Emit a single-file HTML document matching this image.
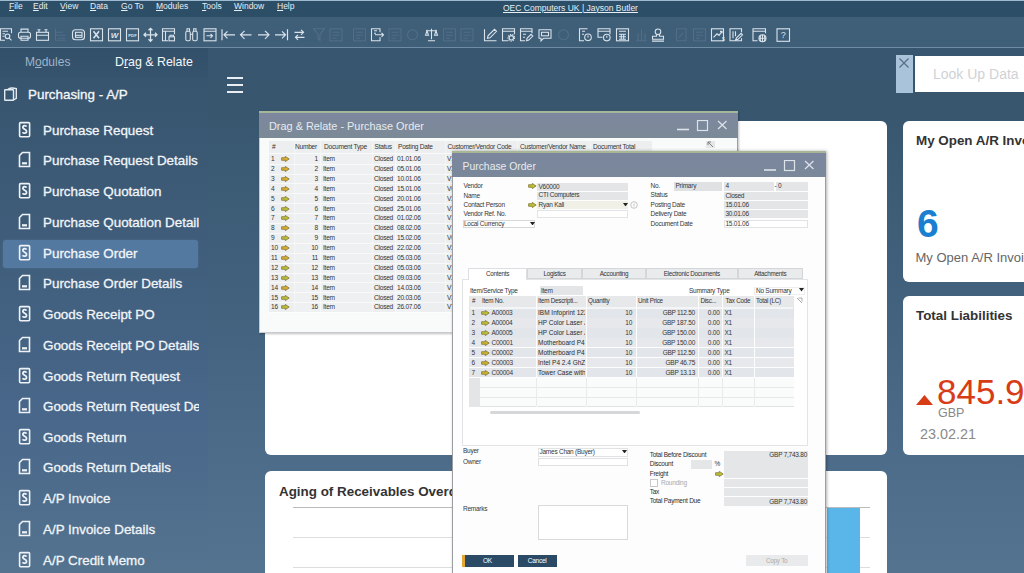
<!DOCTYPE html>
<html><head><meta charset="utf-8">
<style>
*{margin:0;padding:0;box-sizing:border-box}
html,body{width:1024px;height:573px;overflow:hidden;font-family:"Liberation Sans",sans-serif}
body{position:relative;background:linear-gradient(180deg,#37556e 0%,#38576f 20%,#43627e 55%,#4f6e8c 85%,#54738f 100%)}
.a{position:absolute}
.nw{white-space:nowrap}
#menubar{left:0;top:0;width:1024px;height:17px;background:#2c4e67;border-top:1px solid #9dbad0}
#menubar span{position:absolute;top:0px;font-size:8.5px;color:#e6edf3;line-height:11px}
#toolbar{left:0;top:17px;width:1024px;height:31px;background:#3f5e78;border-bottom:1.5px solid #6f8ca4}
#sidebar{left:0;top:48px;width:208px;height:525px;background:linear-gradient(180deg,#36536d 0%,#3c5a75 25%,#48678a 70%,#54738f 100%)}
#sidetabs{left:0;top:48px;width:208px;height:29px;background:linear-gradient(180deg,#32506a,#35536d)}
.si{position:absolute;left:43px;font-size:13.4px;color:#f2f5f8;white-space:nowrap;line-height:16px;-webkit-text-stroke:0.3px #f2f5f8}
.card{position:absolute;background:#fff;border-radius:6px}
</style></head>
<body>
<div id="menubar" class="a">
<span style="left:9px"><u>F</u>ile</span>
<span style="left:33px"><u>E</u>dit</span>
<span style="left:60px"><u>V</u>iew</span>
<span style="left:90px"><u>D</u>ata</span>
<span style="left:121px"><u>G</u>o To</span>
<span style="left:156px"><u>M</u>odules</span>
<span style="left:202px"><u>T</u>ools</span>
<span style="left:234px"><u>W</u>indow</span>
<span style="left:277px"><u>H</u>elp</span>
<span style="left:503px;top:1.5px;text-decoration:underline">OEC Computers UK | Jayson Butler</span>
</div>
<div id="toolbar" class="a"></div><svg class="a" style="left:0;top:0" width="1024" height="47"><g transform="translate(0,28.3)" stroke="#d9e3eb" fill="none" stroke-width="1.1"><path d="M11.5 5 V0.5 H0.5 V12 H5"/><path d="M2.5 3 H8 M2.5 5.5 H5 M2.5 8 H4.5"/><circle cx="7.5" cy="8" r="2.3"/><path d="M9.2 9.8 L11.5 12"/></g><g transform="translate(18,28.3)" stroke="#d9e3eb" fill="none" stroke-width="1.1"><rect x="0.5" y="4" width="12" height="6" rx="2"/><path d="M3 4 V0.8 H10 V4 M3 8 H10 V12 H3 Z"/></g><g transform="translate(36,28.3)" stroke="#d9e3eb" fill="none" stroke-width="1.1"><rect x="0.5" y="4" width="12" height="8"/><path d="M0.5 7 H12.5 M3 4 V1.5 M10 4 V1.5 M1.5 1.5 H4.5 M8.5 1.5 H11.5"/></g><g transform="translate(54.5,28.3)" stroke="#526e87" fill="none" stroke-width="1.1"><path d="M1 0.5 V12 H11 M1 4 H8 M1 7 H11 M4 10 H11"/></g><g transform="translate(72,28.3)" stroke="#d9e3eb" fill="none" stroke-width="1.1"><rect x="0.5" y="1.5" width="12" height="10" rx="3"/><rect x="3.5" y="4" width="6.5" height="5"/><path d="M3.5 7 H10"/></g><g transform="translate(90,28.3)" stroke="#d9e3eb" fill="none" stroke-width="1.1"><rect x="0.5" y="0.5" width="12" height="12"/><path d="M3.5 3 L9 10 M9 3 L3.5 10" stroke-width="1.6"/></g><g transform="translate(108,28.3)" stroke="#d9e3eb" fill="none" stroke-width="1.1"><rect x="0.5" y="0.5" width="12" height="12"/><text x="6.5" y="9.5" font-family="Liberation Sans" font-style="italic" font-weight="700" font-size="8" fill="#d9e3eb" stroke="none" text-anchor="middle">W</text></g><g transform="translate(126,28.3)" stroke="#d9e3eb" fill="none" stroke-width="1.1"><rect x="0.5" y="0.5" width="12" height="12"/><text x="6.5" y="8.3" font-family="Liberation Sans" font-weight="700" font-size="4.2" fill="#d9e3eb" stroke="none" text-anchor="middle">PDF</text></g><g transform="translate(144,28.3)" stroke="#d9e3eb" fill="none" stroke-width="1.1"><path d="M6.5 0 V13 M0 6.5 H13 M4.5 2 L6.5 0 L8.5 2 M2 4.5 L0 6.5 L2 8.5 M11 4.5 L13 6.5 L11 8.5 M4.5 11 L6.5 13 L8.5 11" stroke-width="1.3"/></g><g transform="translate(162,28.3)" stroke="#d9e3eb" fill="none" stroke-width="1.1"><path d="M12.5 6 V0.5 H0.5 V12.5 H6 M0.5 3 H12.5 M3.5 3 V12.5"/><rect x="7" y="8.5" width="5.5" height="4"/><path d="M8 8.5 V7 H11.5 V8.5"/></g><g transform="translate(185,28.3)" stroke="#d9e3eb" fill="none" stroke-width="1.1"><rect x="0.8" y="3" width="4.5" height="9.5" rx="1.5"/><rect x="7.7" y="3" width="4.5" height="9.5" rx="1.5"/><path d="M2 3 V0.5 H4.5 V3 M8.7 3 V0.5 H11 V3 M5.3 6 H7.7"/></g><g transform="translate(203.5,28.3)" stroke="#d9e3eb" fill="none" stroke-width="1.1"><rect x="0.5" y="0.5" width="12" height="12"/><path d="M0.5 3 H12.5 M3 7.5 H9 M7 5.5 L9 7.5 L7 9.5"/></g><g transform="translate(221,28.3)" stroke="#d9e3eb" fill="none" stroke-width="1.1"><path d="M1 1 V12 M3 6.5 H14 M6.5 3 L3 6.5 L6.5 10" stroke-width="1.2"/></g><g transform="translate(239.5,28.3)" stroke="#d9e3eb" fill="none" stroke-width="1.1"><path d="M1 6.5 H12 M5 2.5 L1 6.5 L5 10.5" stroke-width="1.2"/></g><g transform="translate(258,28.3)" stroke="#d9e3eb" fill="none" stroke-width="1.1"><path d="M0 6.5 H11 M7 2.5 L11 6.5 L7 10.5" stroke-width="1.2"/></g><g transform="translate(275,28.3)" stroke="#d9e3eb" fill="none" stroke-width="1.1"><path d="M12.5 1 V12 M0 6.5 H10.5 M7 3 L10.5 6.5 L7 10" stroke-width="1.2"/></g><g transform="translate(293.5,28.3)" stroke="#d9e3eb" fill="none" stroke-width="1.1"><path d="M1 4 H10 M7.5 1.5 L10 4 L7.5 6.5 M11 9 H2 M4.5 6.5 L2 9 L4.5 11.5" stroke-width="1.2"/></g><g transform="translate(313,28.3)" stroke="#526e87" fill="none" stroke-width="1.1"><path d="M0.5 0.5 H11.5 L7 6 V12 L5 10.5 V6 Z"/></g><g transform="translate(329.5,28.3)" stroke="#526e87" fill="none" stroke-width="1.1"><rect x="0.5" y="0.5" width="12" height="12"/><path d="M3 4 H10 M3 7 H10 M3 10 H7"/></g><g transform="translate(353,28.3)" stroke="#526e87" fill="none" stroke-width="1.1"><rect x="0.5" y="0.5" width="12" height="12"/><path d="M3 4 H10 M3 7 H10 M3 10 H7"/></g><g transform="translate(371,28.3)" stroke="#d9e3eb" fill="none" stroke-width="1.1"><path d="M9 4 V0.5 H0.5 V12.5 H9 V9 M3 2.5 H6 M3 5 H5"/><path d="M4 6.5 H12.5 M10.5 4.5 L12.5 6.5 L10.5 8.5"/></g><g transform="translate(388.5,28.3)" stroke="#526e87" fill="none" stroke-width="1.1"><rect x="0.5" y="0.5" width="12" height="12"/><path d="M3 4 H10 M3 7 H10 M3 10 H7"/></g><g transform="translate(406,28.3)" stroke="#526e87" fill="none" stroke-width="1.1"><circle cx="6.5" cy="6.5" r="5"/></g><g transform="translate(425,28.3)" stroke="#d9e3eb" fill="none" stroke-width="1.1"><path d="M6.5 0.5 V11 M1 2.5 H12 M3 12.5 H10 M0.5 7 L2 2.5 L3.5 7 Z M9.5 7 L11 2.5 L12.5 7 Z"/></g><g transform="translate(443,28.3)" stroke="#526e87" fill="none" stroke-width="1.1"><rect x="0.5" y="0.5" width="12" height="12"/><path d="M3 4 H10 M3 7 H10 M3 10 H7"/></g><g transform="translate(460.5,28.3)" stroke="#526e87" fill="none" stroke-width="1.1"><rect x="0.5" y="0.5" width="12" height="12"/><path d="M3 4 H10 M3 7 H10 M3 10 H7"/></g><g transform="translate(484,28.3)" stroke="#d9e3eb" fill="none" stroke-width="1.1"><path d="M0.5 1 V12.5 H12.5 M3.5 10 L4 7.5 L10.5 1 L12.5 3 L6 9.5 Z"/></g><g transform="translate(502,28.3)" stroke="#d9e3eb" fill="none" stroke-width="1.1"><path d="M12.5 6 V0.5 H0.5 V12.5 H6 M0.5 3 H12.5"/><circle cx="9.3" cy="9.5" r="2.2"/><circle cx="9.3" cy="9.5" r="3.3" stroke-dasharray="1.3 1"/></g><g transform="translate(520,28.3)" stroke="#d9e3eb" fill="none" stroke-width="1.1"><path d="M12 5 V0.5 H0.5 V12.5 H5 M0.5 3 H12 M3 6 H6 M3 9 H5"/><path d="M6.5 12.5 L7 10 L11 6 L12.8 7.8 L8.8 11.8 Z"/></g><g transform="translate(538.5,28.3)" stroke="#d9e3eb" fill="none" stroke-width="1.1"><path d="M0.5 1.5 H12.5 V10 H5 L2.5 12.5 V10 H0.5 Z"/><rect x="3" y="4" width="7" height="3.5"/></g><g transform="translate(557,28.3)" stroke="#526e87" fill="none" stroke-width="1.1"><circle cx="6.5" cy="6.5" r="5"/></g><g transform="translate(579,28.3)" stroke="#d9e3eb" fill="none" stroke-width="1.1"><path d="M8 1 V0.5 H0.5 V12.5 H5 M3 3 H6 M3 6 H5"/><circle cx="9" cy="9" r="3.3"/><path d="M9 7.3 V9.3"/></g><g transform="translate(597.5,28.3)" stroke="#d9e3eb" fill="none" stroke-width="1.1"><path d="M12.5 6 V0.5 H0.5 V9 H5 M0.5 3 H12.5"/><circle cx="9.3" cy="9.3" r="3.3"/><path d="M9.3 7.5 V9.5"/></g><g transform="translate(616,28.3)" stroke="#d9e3eb" fill="none" stroke-width="1.1"><rect x="0.5" y="0.5" width="12" height="12"/><path d="M3 3 H10 M3 6 H10 M3 8.5 H10 M3 11 H10 M5.3 6 V11 M7.7 6 V11"/></g><g transform="translate(636,28.3)" stroke="#526e87" fill="none" stroke-width="1.1"><path d="M2 12 V5 M5.5 12 V1 M9 12 V5 M0.5 12.5 H10.5"/></g><g transform="translate(651.5,28.3)" stroke="#d9e3eb" fill="none" stroke-width="1.1"><circle cx="6.5" cy="3.5" r="2.8"/><path d="M5 6.3 V8 H1 V11 H12 V8 H8 V6.3 M0.5 12.8 H12.5"/></g><g transform="translate(676,28.3)" stroke="#526e87" fill="none" stroke-width="1.1"><path d="M0.5 0.5 H10 V12.5 H0.5 Z M3 9 L7 5"/></g><g transform="translate(693,28.3)" stroke="#526e87" fill="none" stroke-width="1.1"><rect x="0.5" y="0.5" width="12" height="12"/><path d="M3 4 H10 M3 7 H10 M3 10 H7"/></g><g transform="translate(711,28.3)" stroke="#d9e3eb" fill="none" stroke-width="1.1"><rect x="0.5" y="0.5" width="12" height="12"/><path d="M2.5 9 L6 5.5 L8 7 L11 3 M9 3 H11 V5" stroke-width="1.2"/><text x="11" y="12.5" font-family="Liberation Sans" font-weight="700" font-size="5" fill="#d9e3eb" stroke="none">$</text></g><g transform="translate(729.5,28.3)" stroke="#d9e3eb" fill="none" stroke-width="1.1"><path d="M12 4 V0.5 H0.5 V12.5 H12 V10 M3.5 3 V10 M6 3 V8"/><path d="M6 12 L7 9.5 L11.5 5 L13 6.5 L8.5 11 Z"/></g><g transform="translate(752.5,28.3)" stroke="#d9e3eb" fill="none" stroke-width="1.1"><path d="M13 5 V0.5 H0.5 V12.5 H5 M0.5 3 H13"/><circle cx="10" cy="10" r="3.5"/><path d="M6.5 10 H13.5 M10 6.5 V13.5 M8.3 7 Q7 10 8.3 13 M11.7 7 Q13 10 11.7 13"/></g><g transform="translate(776.5,28.3)" stroke="#d9e3eb" fill="none" stroke-width="1.1"><rect x="0.5" y="0.5" width="12.5" height="12.5"/><text x="6.75" y="10" font-family="Liberation Sans" font-size="9" fill="#d9e3eb" stroke="none" text-anchor="middle">?</text></g></svg>
<div id="sidebar" class="a"></div>
<div id="sidetabs" class="a">
<span class="a nw" style="left:25px;top:7px;font-size:12px;color:#9fb4c8">M<u style="text-decoration-thickness:1px">o</u>dules</span>
<span class="a nw" style="left:115px;top:6.5px;font-size:12.4px;color:#f4f7fa">D<u style="text-decoration-thickness:1px">r</u>ag &amp; Relate</span>
</div>
<!-- book icon -->
<svg class="a" style="left:3px;top:86px" width="16" height="16" viewBox="0 0 16 16" fill="none" stroke="#e3ebf2" stroke-width="1.4"><rect x="1.7" y="3.7" width="8.8" height="10.5" rx="0.5"/><path d="M4.5 3.7 Q6.5 1.6 9.5 2 L13.3 2.6 L13.3 12.3 L10.5 14"/></svg>
<span class="a nw" style="left:28px;top:87px;font-size:13.4px;color:#f4f7fa;-webkit-text-stroke:0.3px #f4f7fa">Purchasing - A/P</span>

<div class="a" style="left:3px;top:240px;width:195px;height:28px;background:#5479a1;border-radius:3px;box-shadow:0 0 2px rgba(90,130,170,.6)"></div>
<div class="a" style="left:0;top:111px;width:199px;height:462px;overflow:hidden">
<div class="si" style="top:12px">Purchase Request</div>
<div class="si" style="top:42px">Purchase Request Details</div>
<div class="si" style="top:73px">Purchase Quotation</div>
<div class="si" style="top:104px">Purchase Quotation Details</div>
<div class="si" style="top:135px">Purchase Order</div>
<div class="si" style="top:165px">Purchase Order Details</div>
<div class="si" style="top:196px">Goods Receipt PO</div>
<div class="si" style="top:227px">Goods Receipt PO Details</div>
<div class="si" style="top:258px">Goods Return Request</div>
<div class="si" style="top:288px">Goods Return Request Details</div>
<div class="si" style="top:319px">Goods Return</div>
<div class="si" style="top:349px">Goods Return Details</div>
<div class="si" style="top:380px">A/P Invoice</div>
<div class="si" style="top:411px">A/P Invoice Details</div>
<div class="si" style="top:442px">A/P Credit Memo</div>
</div>
<svg class="a" style="left:0;top:109.5px" width="40" height="463" fill="none" stroke="#eef2f6" stroke-width="1.6">

<g transform="translate(0,12)"><rect x="19.6" y="0.6" width="10" height="14.2" rx="1"/><path d="M26.5 4.7 C26 3.5 23.7 3.2 23 4.6 C22.4 6 23.8 6.8 24.7 7.3 C25.7 7.8 26.9 8.6 26.4 10.1 C25.8 11.5 23.4 11.5 22.5 10.3" stroke-width="1.8"/></g><g transform="translate(0,42)"><path d="M22.5 0.5 L29.5 0.5 L29.5 14.5 L19.5 14.5 L19.5 3.5 Z"/><path d="M22 11.3 L27 11.3" stroke-width="2.2"/></g><g transform="translate(0,73)"><rect x="19.6" y="0.6" width="10" height="14.2" rx="1"/><path d="M26.5 4.7 C26 3.5 23.7 3.2 23 4.6 C22.4 6 23.8 6.8 24.7 7.3 C25.7 7.8 26.9 8.6 26.4 10.1 C25.8 11.5 23.4 11.5 22.5 10.3" stroke-width="1.8"/></g><g transform="translate(0,104)"><path d="M22.5 0.5 L29.5 0.5 L29.5 14.5 L19.5 14.5 L19.5 3.5 Z"/><path d="M22 11.3 L27 11.3" stroke-width="2.2"/></g><g transform="translate(0,135)"><rect x="19.6" y="0.6" width="10" height="14.2" rx="1"/><path d="M26.5 4.7 C26 3.5 23.7 3.2 23 4.6 C22.4 6 23.8 6.8 24.7 7.3 C25.7 7.8 26.9 8.6 26.4 10.1 C25.8 11.5 23.4 11.5 22.5 10.3" stroke-width="1.8"/></g><g transform="translate(0,165)"><path d="M22.5 0.5 L29.5 0.5 L29.5 14.5 L19.5 14.5 L19.5 3.5 Z"/><path d="M22 11.3 L27 11.3" stroke-width="2.2"/></g><g transform="translate(0,196)"><rect x="19.6" y="0.6" width="10" height="14.2" rx="1"/><path d="M26.5 4.7 C26 3.5 23.7 3.2 23 4.6 C22.4 6 23.8 6.8 24.7 7.3 C25.7 7.8 26.9 8.6 26.4 10.1 C25.8 11.5 23.4 11.5 22.5 10.3" stroke-width="1.8"/></g><g transform="translate(0,227)"><path d="M22.5 0.5 L29.5 0.5 L29.5 14.5 L19.5 14.5 L19.5 3.5 Z"/><path d="M22 11.3 L27 11.3" stroke-width="2.2"/></g><g transform="translate(0,258)"><rect x="19.6" y="0.6" width="10" height="14.2" rx="1"/><path d="M26.5 4.7 C26 3.5 23.7 3.2 23 4.6 C22.4 6 23.8 6.8 24.7 7.3 C25.7 7.8 26.9 8.6 26.4 10.1 C25.8 11.5 23.4 11.5 22.5 10.3" stroke-width="1.8"/></g><g transform="translate(0,288)"><path d="M22.5 0.5 L29.5 0.5 L29.5 14.5 L19.5 14.5 L19.5 3.5 Z"/><path d="M22 11.3 L27 11.3" stroke-width="2.2"/></g><g transform="translate(0,319)"><rect x="19.6" y="0.6" width="10" height="14.2" rx="1"/><path d="M26.5 4.7 C26 3.5 23.7 3.2 23 4.6 C22.4 6 23.8 6.8 24.7 7.3 C25.7 7.8 26.9 8.6 26.4 10.1 C25.8 11.5 23.4 11.5 22.5 10.3" stroke-width="1.8"/></g><g transform="translate(0,349)"><path d="M22.5 0.5 L29.5 0.5 L29.5 14.5 L19.5 14.5 L19.5 3.5 Z"/><path d="M22 11.3 L27 11.3" stroke-width="2.2"/></g><g transform="translate(0,380)"><rect x="19.6" y="0.6" width="10" height="14.2" rx="1"/><path d="M26.5 4.7 C26 3.5 23.7 3.2 23 4.6 C22.4 6 23.8 6.8 24.7 7.3 C25.7 7.8 26.9 8.6 26.4 10.1 C25.8 11.5 23.4 11.5 22.5 10.3" stroke-width="1.8"/></g><g transform="translate(0,411)"><path d="M22.5 0.5 L29.5 0.5 L29.5 14.5 L19.5 14.5 L19.5 3.5 Z"/><path d="M22 11.3 L27 11.3" stroke-width="2.2"/></g><g transform="translate(0,442)"><rect x="19.6" y="0.6" width="10" height="14.2" rx="1"/><path d="M26.5 4.7 C26 3.5 23.7 3.2 23 4.6 C22.4 6 23.8 6.8 24.7 7.3 C25.7 7.8 26.9 8.6 26.4 10.1 C25.8 11.5 23.4 11.5 22.5 10.3" stroke-width="1.8"/></g>
</svg>

<!-- hamburger -->
<div class="a" style="left:227px;top:77px;width:16px;height:2px;background:#e8eef3"></div>
<div class="a" style="left:227px;top:84px;width:16px;height:2px;background:#e8eef3"></div>
<div class="a" style="left:227px;top:91px;width:16px;height:2px;background:#e8eef3"></div>

<!-- lookup -->
<div class="a" style="left:896px;top:55px;width:17px;height:38px;background:#a9c3da"></div>
<svg class="a" style="left:898px;top:57px" width="12" height="12" stroke="#5b7286" stroke-width="1.3"><path d="M1.5 1.5 L10.5 10.5 M10.5 1.5 L1.5 10.5"/></svg>
<div class="a" style="left:915px;top:56px;width:109px;height:36px;background:#fff"></div>
<span class="a nw" style="left:933px;top:65.5px;font-size:14px;color:#cfd2d5">Look Up Data</span>

<!-- dashboard cards -->
<div class="card" style="left:265px;top:121px;width:622px;height:334px"></div>
<div class="card" style="left:903px;top:121px;width:140px;height:161px">
<span class="a nw" style="left:13px;top:12px;font-size:13.4px;font-weight:700;color:#333">My Open A/R Invoices</span>
<span class="a nw" style="left:14px;top:81px;font-size:39px;font-weight:700;color:#1a7fd0">6</span>
<span class="a nw" style="left:12.5px;top:129px;font-size:13px;color:#666">My Open A/R Invoices</span>
</div>
<div class="card" style="left:903px;top:296px;width:140px;height:159px">
<span class="a nw" style="left:13px;top:12px;font-size:13.4px;font-weight:700;color:#333">Total Liabilities</span>
<svg class="a" style="left:13px;top:99px" width="17" height="10"><path d="M0 10 L8.5 0 L17 10 Z" fill="#d83c17"/></svg>
<span class="a nw" style="left:34px;top:76px;font-size:35px;color:#d83c17">845.90</span>
<span class="a nw" style="left:35px;top:110px;font-size:12.5px;color:#888">GBP</span>
<span class="a nw" style="left:17px;top:130px;font-size:14.4px;color:#8a8a8a">23.02.21</span>
</div>
<div class="card" style="left:265px;top:471px;width:622px;height:110px">
<span class="a nw" style="left:14px;top:13px;font-size:13.4px;font-weight:700;color:#333">Aging of Receivables Overdue</span>
<div class="a" style="left:28px;top:36px;width:577px;height:1px;background:#bbb"></div>
<div class="a" style="left:28px;top:66px;width:577px;height:1px;background:#ddd"></div>
<div class="a" style="left:28px;top:96px;width:577px;height:1px;background:#ddd"></div>
<div class="a" style="left:562px;top:37px;width:33px;height:80px;background:#5ab5e8"></div>
</div>

<div class="a" style="left:259px;top:111px;width:479px;height:222px;background:#f9fafa;border-left:1px solid #c5cbd0;border-right:1px solid #9aa0a6;border-bottom:1px solid #c8ccd0;box-shadow:1px 1px 2px rgba(0,0,0,.25)"></div>
<div class="a" style="left:259px;top:111px;width:479px;height:2px;background:#a6b698;"></div>
<div class="a" style="left:259px;top:113px;width:479px;height:25px;background:linear-gradient(180deg,#7d879f 0%,#7b8a96 100%);"></div>
<span class="a nw" style="left:269px;top:121px;line-height:10px;font-size:10.9px;color:#e6ebef;">Drag &amp; Relate - Purchase Order</span>
<svg class="a" style="left:677px;top:120px" width="60" height="14" fill="none" stroke="#dde3ea" stroke-width="1.2"><path d="M0 9.5 L12 9.5" stroke-width="1.6"/><rect x="20.5" y="0.5" width="10" height="10"/><path d="M41 1 L49.5 9 M49.5 1 L41 9"/></svg>
<div class="a" style="left:269px;top:141px;width:383px;height:11.5px;background:#eceeef;"></div>
<span class="a nw" style="left:272px;top:142px;line-height:10px;font-size:6.6px;color:#333;letter-spacing:-0.25px;">#</span>
<span class="a nw" style="left:295px;top:142px;line-height:10px;font-size:6.6px;color:#333;letter-spacing:-0.25px;">Number</span>
<span class="a nw" style="left:324px;top:142px;line-height:10px;font-size:6.6px;color:#333;letter-spacing:-0.25px;">Document Type</span>
<span class="a nw" style="left:374.5px;top:142px;line-height:10px;font-size:6.6px;color:#333;letter-spacing:-0.25px;">Status</span>
<span class="a nw" style="left:398px;top:142px;line-height:10px;font-size:6.6px;color:#333;letter-spacing:-0.25px;">Posting Date</span>
<span class="a nw" style="left:447.5px;top:142px;line-height:10px;font-size:6.6px;color:#333;letter-spacing:-0.25px;">Customer/Vendor Code</span>
<span class="a nw" style="left:520px;top:142px;line-height:10px;font-size:6.6px;color:#333;letter-spacing:-0.25px;">Customer/Vendor Name</span>
<span class="a nw" style="left:593px;top:142px;line-height:10px;font-size:6.6px;color:#333;letter-spacing:-0.25px;">Document Total</span>
<div class="a" style="left:269px;top:153.5px;width:383px;height:158.5px;background:#eceeef;"></div>
<div class="a" style="left:295px;top:153.5px;width:77px;height:158.5px;background:#eff0f1;"></div>
<div class="a" style="left:395px;top:153.5px;width:25px;height:158.5px;background:#f1f2f3;"></div>
<div class="a" style="left:294px;top:141px;width:0.6000000000000227px;height:171px;background:rgba(255,255,255,0.45);"></div>
<div class="a" style="left:320px;top:141px;width:0.6000000000000227px;height:171px;background:rgba(255,255,255,0.45);"></div>
<div class="a" style="left:372px;top:141px;width:0.6000000000000227px;height:171px;background:rgba(255,255,255,0.45);"></div>
<div class="a" style="left:395px;top:141px;width:0.6000000000000227px;height:171px;background:rgba(255,255,255,0.45);"></div>
<div class="a" style="left:444.5px;top:141px;width:0.6000000000000227px;height:171px;background:rgba(255,255,255,0.45);"></div>
<div class="a" style="left:517px;top:141px;width:0.6000000000000227px;height:171px;background:rgba(255,255,255,0.45);"></div>
<div class="a" style="left:590px;top:141px;width:0.6000000000000227px;height:171px;background:rgba(255,255,255,0.45);"></div>
<div class="a" style="left:269px;top:163.6px;width:383px;height:0.700000000000017px;background:rgba(255,255,255,0.6);"></div>
<span class="a nw" style="left:271px;top:154px;line-height:10px;font-size:6.6px;color:#333;letter-spacing:-0.25px;">1</span>
<svg class="a" style="left:280.5px;top:156px" width="9" height="6" viewBox="0 0 9 6"><path d="M0.6 1.7 L4.3 1.7 L4.3 0.4 L8.2 3 L4.3 5.6 L4.3 4.3 L0.6 4.3 Z" fill="#d9ae33" stroke="#7d6a22" stroke-width="0.7" stroke-linejoin="round"/></svg>
<span class="a nw" style="right:706px;top:154px;line-height:10px;font-size:6.6px;color:#333;letter-spacing:-0.25px;">1</span>
<span class="a nw" style="left:323px;top:154px;line-height:10px;font-size:6.6px;color:#333;letter-spacing:-0.25px;">Item</span>
<span class="a nw" style="left:374px;top:154px;line-height:10px;font-size:6.6px;color:#333;letter-spacing:-0.25px;">Closed</span>
<span class="a nw" style="left:397px;top:154px;line-height:10px;font-size:6.6px;color:#333;letter-spacing:-0.25px;">01.01.06</span>
<span class="a nw" style="left:447px;top:154px;line-height:10px;font-size:6.6px;color:#333;letter-spacing:-0.25px;">V10000</span>
<div class="a" style="left:269px;top:173.5px;width:383px;height:0.700000000000017px;background:rgba(255,255,255,0.6);"></div>
<span class="a nw" style="left:271px;top:164px;line-height:10px;font-size:6.6px;color:#333;letter-spacing:-0.25px;">2</span>
<svg class="a" style="left:280.5px;top:166px" width="9" height="6" viewBox="0 0 9 6"><path d="M0.6 1.7 L4.3 1.7 L4.3 0.4 L8.2 3 L4.3 5.6 L4.3 4.3 L0.6 4.3 Z" fill="#d9ae33" stroke="#7d6a22" stroke-width="0.7" stroke-linejoin="round"/></svg>
<span class="a nw" style="right:706px;top:164px;line-height:10px;font-size:6.6px;color:#333;letter-spacing:-0.25px;">2</span>
<span class="a nw" style="left:323px;top:164px;line-height:10px;font-size:6.6px;color:#333;letter-spacing:-0.25px;">Item</span>
<span class="a nw" style="left:374px;top:164px;line-height:10px;font-size:6.6px;color:#333;letter-spacing:-0.25px;">Closed</span>
<span class="a nw" style="left:397px;top:164px;line-height:10px;font-size:6.6px;color:#333;letter-spacing:-0.25px;">05.01.06</span>
<span class="a nw" style="left:447px;top:164px;line-height:10px;font-size:6.6px;color:#333;letter-spacing:-0.25px;">V20000</span>
<div class="a" style="left:269px;top:183.4px;width:383px;height:0.700000000000017px;background:rgba(255,255,255,0.6);"></div>
<span class="a nw" style="left:271px;top:174px;line-height:10px;font-size:6.6px;color:#333;letter-spacing:-0.25px;">3</span>
<svg class="a" style="left:280.5px;top:176px" width="9" height="6" viewBox="0 0 9 6"><path d="M0.6 1.7 L4.3 1.7 L4.3 0.4 L8.2 3 L4.3 5.6 L4.3 4.3 L0.6 4.3 Z" fill="#d9ae33" stroke="#7d6a22" stroke-width="0.7" stroke-linejoin="round"/></svg>
<span class="a nw" style="right:706px;top:174px;line-height:10px;font-size:6.6px;color:#333;letter-spacing:-0.25px;">3</span>
<span class="a nw" style="left:323px;top:174px;line-height:10px;font-size:6.6px;color:#333;letter-spacing:-0.25px;">Item</span>
<span class="a nw" style="left:374px;top:174px;line-height:10px;font-size:6.6px;color:#333;letter-spacing:-0.25px;">Closed</span>
<span class="a nw" style="left:397px;top:174px;line-height:10px;font-size:6.6px;color:#333;letter-spacing:-0.25px;">10.01.06</span>
<span class="a nw" style="left:447px;top:174px;line-height:10px;font-size:6.6px;color:#333;letter-spacing:-0.25px;">V10000</span>
<div class="a" style="left:269px;top:193.29999999999998px;width:383px;height:0.700000000000017px;background:rgba(255,255,255,0.6);"></div>
<span class="a nw" style="left:271px;top:184px;line-height:10px;font-size:6.6px;color:#333;letter-spacing:-0.25px;">4</span>
<svg class="a" style="left:280.5px;top:186px" width="9" height="6" viewBox="0 0 9 6"><path d="M0.6 1.7 L4.3 1.7 L4.3 0.4 L8.2 3 L4.3 5.6 L4.3 4.3 L0.6 4.3 Z" fill="#d9ae33" stroke="#7d6a22" stroke-width="0.7" stroke-linejoin="round"/></svg>
<span class="a nw" style="right:706px;top:184px;line-height:10px;font-size:6.6px;color:#333;letter-spacing:-0.25px;">4</span>
<span class="a nw" style="left:323px;top:184px;line-height:10px;font-size:6.6px;color:#333;letter-spacing:-0.25px;">Item</span>
<span class="a nw" style="left:374px;top:184px;line-height:10px;font-size:6.6px;color:#333;letter-spacing:-0.25px;">Closed</span>
<span class="a nw" style="left:397px;top:184px;line-height:10px;font-size:6.6px;color:#333;letter-spacing:-0.25px;">15.01.06</span>
<span class="a nw" style="left:447px;top:184px;line-height:10px;font-size:6.6px;color:#333;letter-spacing:-0.25px;">V60000</span>
<div class="a" style="left:269px;top:203.2px;width:383px;height:0.700000000000017px;background:rgba(255,255,255,0.6);"></div>
<span class="a nw" style="left:271px;top:194px;line-height:10px;font-size:6.6px;color:#333;letter-spacing:-0.25px;">5</span>
<svg class="a" style="left:280.5px;top:196px" width="9" height="6" viewBox="0 0 9 6"><path d="M0.6 1.7 L4.3 1.7 L4.3 0.4 L8.2 3 L4.3 5.6 L4.3 4.3 L0.6 4.3 Z" fill="#b9c03e" stroke="#7d6a22" stroke-width="0.7" stroke-linejoin="round"/></svg>
<span class="a nw" style="right:706px;top:194px;line-height:10px;font-size:6.6px;color:#333;letter-spacing:-0.25px;">5</span>
<span class="a nw" style="left:323px;top:194px;line-height:10px;font-size:6.6px;color:#333;letter-spacing:-0.25px;">Item</span>
<span class="a nw" style="left:374px;top:194px;line-height:10px;font-size:6.6px;color:#333;letter-spacing:-0.25px;">Closed</span>
<span class="a nw" style="left:397px;top:194px;line-height:10px;font-size:6.6px;color:#333;letter-spacing:-0.25px;">20.01.06</span>
<span class="a nw" style="left:447px;top:194px;line-height:10px;font-size:6.6px;color:#333;letter-spacing:-0.25px;">V20000</span>
<div class="a" style="left:269px;top:213.1px;width:383px;height:0.700000000000017px;background:rgba(255,255,255,0.6);"></div>
<span class="a nw" style="left:271px;top:204px;line-height:10px;font-size:6.6px;color:#333;letter-spacing:-0.25px;">6</span>
<svg class="a" style="left:280.5px;top:206px" width="9" height="6" viewBox="0 0 9 6"><path d="M0.6 1.7 L4.3 1.7 L4.3 0.4 L8.2 3 L4.3 5.6 L4.3 4.3 L0.6 4.3 Z" fill="#b9c03e" stroke="#7d6a22" stroke-width="0.7" stroke-linejoin="round"/></svg>
<span class="a nw" style="right:706px;top:204px;line-height:10px;font-size:6.6px;color:#333;letter-spacing:-0.25px;">6</span>
<span class="a nw" style="left:323px;top:204px;line-height:10px;font-size:6.6px;color:#333;letter-spacing:-0.25px;">Item</span>
<span class="a nw" style="left:374px;top:204px;line-height:10px;font-size:6.6px;color:#333;letter-spacing:-0.25px;">Closed</span>
<span class="a nw" style="left:397px;top:204px;line-height:10px;font-size:6.6px;color:#333;letter-spacing:-0.25px;">25.01.06</span>
<span class="a nw" style="left:447px;top:204px;line-height:10px;font-size:6.6px;color:#333;letter-spacing:-0.25px;">V20000</span>
<div class="a" style="left:269px;top:223.0px;width:383px;height:0.700000000000017px;background:rgba(255,255,255,0.6);"></div>
<span class="a nw" style="left:271px;top:213px;line-height:10px;font-size:6.6px;color:#333;letter-spacing:-0.25px;">7</span>
<svg class="a" style="left:280.5px;top:215px" width="9" height="6" viewBox="0 0 9 6"><path d="M0.6 1.7 L4.3 1.7 L4.3 0.4 L8.2 3 L4.3 5.6 L4.3 4.3 L0.6 4.3 Z" fill="#b9c03e" stroke="#7d6a22" stroke-width="0.7" stroke-linejoin="round"/></svg>
<span class="a nw" style="right:706px;top:213px;line-height:10px;font-size:6.6px;color:#333;letter-spacing:-0.25px;">7</span>
<span class="a nw" style="left:323px;top:213px;line-height:10px;font-size:6.6px;color:#333;letter-spacing:-0.25px;">Item</span>
<span class="a nw" style="left:374px;top:213px;line-height:10px;font-size:6.6px;color:#333;letter-spacing:-0.25px;">Closed</span>
<span class="a nw" style="left:397px;top:213px;line-height:10px;font-size:6.6px;color:#333;letter-spacing:-0.25px;">01.02.06</span>
<span class="a nw" style="left:447px;top:213px;line-height:10px;font-size:6.6px;color:#333;letter-spacing:-0.25px;">V10000</span>
<div class="a" style="left:269px;top:232.9px;width:383px;height:0.700000000000017px;background:rgba(255,255,255,0.6);"></div>
<span class="a nw" style="left:271px;top:223px;line-height:10px;font-size:6.6px;color:#333;letter-spacing:-0.25px;">8</span>
<svg class="a" style="left:280.5px;top:225px" width="9" height="6" viewBox="0 0 9 6"><path d="M0.6 1.7 L4.3 1.7 L4.3 0.4 L8.2 3 L4.3 5.6 L4.3 4.3 L0.6 4.3 Z" fill="#d9ae33" stroke="#7d6a22" stroke-width="0.7" stroke-linejoin="round"/></svg>
<span class="a nw" style="right:706px;top:223px;line-height:10px;font-size:6.6px;color:#333;letter-spacing:-0.25px;">8</span>
<span class="a nw" style="left:323px;top:223px;line-height:10px;font-size:6.6px;color:#333;letter-spacing:-0.25px;">Item</span>
<span class="a nw" style="left:374px;top:223px;line-height:10px;font-size:6.6px;color:#333;letter-spacing:-0.25px;">Closed</span>
<span class="a nw" style="left:397px;top:223px;line-height:10px;font-size:6.6px;color:#333;letter-spacing:-0.25px;">08.02.06</span>
<span class="a nw" style="left:447px;top:223px;line-height:10px;font-size:6.6px;color:#333;letter-spacing:-0.25px;">V10000</span>
<div class="a" style="left:269px;top:242.79999999999998px;width:383px;height:0.700000000000017px;background:rgba(255,255,255,0.6);"></div>
<span class="a nw" style="left:271px;top:233px;line-height:10px;font-size:6.6px;color:#333;letter-spacing:-0.25px;">9</span>
<svg class="a" style="left:280.5px;top:235px" width="9" height="6" viewBox="0 0 9 6"><path d="M0.6 1.7 L4.3 1.7 L4.3 0.4 L8.2 3 L4.3 5.6 L4.3 4.3 L0.6 4.3 Z" fill="#b9c03e" stroke="#7d6a22" stroke-width="0.7" stroke-linejoin="round"/></svg>
<span class="a nw" style="right:706px;top:233px;line-height:10px;font-size:6.6px;color:#333;letter-spacing:-0.25px;">9</span>
<span class="a nw" style="left:323px;top:233px;line-height:10px;font-size:6.6px;color:#333;letter-spacing:-0.25px;">Item</span>
<span class="a nw" style="left:374px;top:233px;line-height:10px;font-size:6.6px;color:#333;letter-spacing:-0.25px;">Closed</span>
<span class="a nw" style="left:397px;top:233px;line-height:10px;font-size:6.6px;color:#333;letter-spacing:-0.25px;">15.02.06</span>
<span class="a nw" style="left:447px;top:233px;line-height:10px;font-size:6.6px;color:#333;letter-spacing:-0.25px;">V60000</span>
<div class="a" style="left:269px;top:252.70000000000002px;width:383px;height:0.700000000000017px;background:rgba(255,255,255,0.6);"></div>
<span class="a nw" style="left:271px;top:243px;line-height:10px;font-size:6.6px;color:#333;letter-spacing:-0.25px;">10</span>
<svg class="a" style="left:280.5px;top:245px" width="9" height="6" viewBox="0 0 9 6"><path d="M0.6 1.7 L4.3 1.7 L4.3 0.4 L8.2 3 L4.3 5.6 L4.3 4.3 L0.6 4.3 Z" fill="#d9ae33" stroke="#7d6a22" stroke-width="0.7" stroke-linejoin="round"/></svg>
<span class="a nw" style="right:706px;top:243px;line-height:10px;font-size:6.6px;color:#333;letter-spacing:-0.25px;">10</span>
<span class="a nw" style="left:323px;top:243px;line-height:10px;font-size:6.6px;color:#333;letter-spacing:-0.25px;">Item</span>
<span class="a nw" style="left:374px;top:243px;line-height:10px;font-size:6.6px;color:#333;letter-spacing:-0.25px;">Closed</span>
<span class="a nw" style="left:397px;top:243px;line-height:10px;font-size:6.6px;color:#333;letter-spacing:-0.25px;">22.02.06</span>
<span class="a nw" style="left:447px;top:243px;line-height:10px;font-size:6.6px;color:#333;letter-spacing:-0.25px;">V20000</span>
<div class="a" style="left:269px;top:262.6px;width:383px;height:0.6999999999999886px;background:rgba(255,255,255,0.6);"></div>
<span class="a nw" style="left:271px;top:253px;line-height:10px;font-size:6.6px;color:#333;letter-spacing:-0.25px;">11</span>
<svg class="a" style="left:280.5px;top:255px" width="9" height="6" viewBox="0 0 9 6"><path d="M0.6 1.7 L4.3 1.7 L4.3 0.4 L8.2 3 L4.3 5.6 L4.3 4.3 L0.6 4.3 Z" fill="#d9ae33" stroke="#7d6a22" stroke-width="0.7" stroke-linejoin="round"/></svg>
<span class="a nw" style="right:706px;top:253px;line-height:10px;font-size:6.6px;color:#333;letter-spacing:-0.25px;">11</span>
<span class="a nw" style="left:323px;top:253px;line-height:10px;font-size:6.6px;color:#333;letter-spacing:-0.25px;">Item</span>
<span class="a nw" style="left:374px;top:253px;line-height:10px;font-size:6.6px;color:#333;letter-spacing:-0.25px;">Closed</span>
<span class="a nw" style="left:397px;top:253px;line-height:10px;font-size:6.6px;color:#333;letter-spacing:-0.25px;">05.03.06</span>
<span class="a nw" style="left:447px;top:253px;line-height:10px;font-size:6.6px;color:#333;letter-spacing:-0.25px;">V10000</span>
<div class="a" style="left:269px;top:272.5px;width:383px;height:0.6999999999999886px;background:rgba(255,255,255,0.6);"></div>
<span class="a nw" style="left:271px;top:263px;line-height:10px;font-size:6.6px;color:#333;letter-spacing:-0.25px;">12</span>
<svg class="a" style="left:280.5px;top:265px" width="9" height="6" viewBox="0 0 9 6"><path d="M0.6 1.7 L4.3 1.7 L4.3 0.4 L8.2 3 L4.3 5.6 L4.3 4.3 L0.6 4.3 Z" fill="#b9c03e" stroke="#7d6a22" stroke-width="0.7" stroke-linejoin="round"/></svg>
<span class="a nw" style="right:706px;top:263px;line-height:10px;font-size:6.6px;color:#333;letter-spacing:-0.25px;">12</span>
<span class="a nw" style="left:323px;top:263px;line-height:10px;font-size:6.6px;color:#333;letter-spacing:-0.25px;">Item</span>
<span class="a nw" style="left:374px;top:263px;line-height:10px;font-size:6.6px;color:#333;letter-spacing:-0.25px;">Closed</span>
<span class="a nw" style="left:397px;top:263px;line-height:10px;font-size:6.6px;color:#333;letter-spacing:-0.25px;">05.03.06</span>
<span class="a nw" style="left:447px;top:263px;line-height:10px;font-size:6.6px;color:#333;letter-spacing:-0.25px;">V10000</span>
<div class="a" style="left:269px;top:282.40000000000003px;width:383px;height:0.6999999999999886px;background:rgba(255,255,255,0.6);"></div>
<span class="a nw" style="left:271px;top:273px;line-height:10px;font-size:6.6px;color:#333;letter-spacing:-0.25px;">13</span>
<svg class="a" style="left:280.5px;top:275px" width="9" height="6" viewBox="0 0 9 6"><path d="M0.6 1.7 L4.3 1.7 L4.3 0.4 L8.2 3 L4.3 5.6 L4.3 4.3 L0.6 4.3 Z" fill="#b9c03e" stroke="#7d6a22" stroke-width="0.7" stroke-linejoin="round"/></svg>
<span class="a nw" style="right:706px;top:273px;line-height:10px;font-size:6.6px;color:#333;letter-spacing:-0.25px;">13</span>
<span class="a nw" style="left:323px;top:273px;line-height:10px;font-size:6.6px;color:#333;letter-spacing:-0.25px;">Item</span>
<span class="a nw" style="left:374px;top:273px;line-height:10px;font-size:6.6px;color:#333;letter-spacing:-0.25px;">Closed</span>
<span class="a nw" style="left:397px;top:273px;line-height:10px;font-size:6.6px;color:#333;letter-spacing:-0.25px;">09.03.06</span>
<span class="a nw" style="left:447px;top:273px;line-height:10px;font-size:6.6px;color:#333;letter-spacing:-0.25px;">V20000</span>
<div class="a" style="left:269px;top:292.30000000000007px;width:383px;height:0.6999999999999886px;background:rgba(255,255,255,0.6);"></div>
<span class="a nw" style="left:271px;top:283px;line-height:10px;font-size:6.6px;color:#333;letter-spacing:-0.25px;">14</span>
<svg class="a" style="left:280.5px;top:285px" width="9" height="6" viewBox="0 0 9 6"><path d="M0.6 1.7 L4.3 1.7 L4.3 0.4 L8.2 3 L4.3 5.6 L4.3 4.3 L0.6 4.3 Z" fill="#d9ae33" stroke="#7d6a22" stroke-width="0.7" stroke-linejoin="round"/></svg>
<span class="a nw" style="right:706px;top:283px;line-height:10px;font-size:6.6px;color:#333;letter-spacing:-0.25px;">14</span>
<span class="a nw" style="left:323px;top:283px;line-height:10px;font-size:6.6px;color:#333;letter-spacing:-0.25px;">Item</span>
<span class="a nw" style="left:374px;top:283px;line-height:10px;font-size:6.6px;color:#333;letter-spacing:-0.25px;">Closed</span>
<span class="a nw" style="left:397px;top:283px;line-height:10px;font-size:6.6px;color:#333;letter-spacing:-0.25px;">14.03.06</span>
<span class="a nw" style="left:447px;top:283px;line-height:10px;font-size:6.6px;color:#333;letter-spacing:-0.25px;">V10000</span>
<div class="a" style="left:269px;top:302.20000000000005px;width:383px;height:0.6999999999999886px;background:rgba(255,255,255,0.6);"></div>
<span class="a nw" style="left:271px;top:293px;line-height:10px;font-size:6.6px;color:#333;letter-spacing:-0.25px;">15</span>
<svg class="a" style="left:280.5px;top:295px" width="9" height="6" viewBox="0 0 9 6"><path d="M0.6 1.7 L4.3 1.7 L4.3 0.4 L8.2 3 L4.3 5.6 L4.3 4.3 L0.6 4.3 Z" fill="#b9c03e" stroke="#7d6a22" stroke-width="0.7" stroke-linejoin="round"/></svg>
<span class="a nw" style="right:706px;top:293px;line-height:10px;font-size:6.6px;color:#333;letter-spacing:-0.25px;">15</span>
<span class="a nw" style="left:323px;top:293px;line-height:10px;font-size:6.6px;color:#333;letter-spacing:-0.25px;">Item</span>
<span class="a nw" style="left:374px;top:293px;line-height:10px;font-size:6.6px;color:#333;letter-spacing:-0.25px;">Closed</span>
<span class="a nw" style="left:397px;top:293px;line-height:10px;font-size:6.6px;color:#333;letter-spacing:-0.25px;">20.03.06</span>
<span class="a nw" style="left:447px;top:293px;line-height:10px;font-size:6.6px;color:#333;letter-spacing:-0.25px;">V20000</span>
<div class="a" style="left:269px;top:312.1px;width:383px;height:0.6999999999999886px;background:rgba(255,255,255,0.6);"></div>
<span class="a nw" style="left:271px;top:302px;line-height:10px;font-size:6.6px;color:#333;letter-spacing:-0.25px;">16</span>
<svg class="a" style="left:280.5px;top:304px" width="9" height="6" viewBox="0 0 9 6"><path d="M0.6 1.7 L4.3 1.7 L4.3 0.4 L8.2 3 L4.3 5.6 L4.3 4.3 L0.6 4.3 Z" fill="#b9c03e" stroke="#7d6a22" stroke-width="0.7" stroke-linejoin="round"/></svg>
<span class="a nw" style="right:706px;top:302px;line-height:10px;font-size:6.6px;color:#333;letter-spacing:-0.25px;">16</span>
<span class="a nw" style="left:323px;top:302px;line-height:10px;font-size:6.6px;color:#333;letter-spacing:-0.25px;">Item</span>
<span class="a nw" style="left:374px;top:302px;line-height:10px;font-size:6.6px;color:#333;letter-spacing:-0.25px;">Closed</span>
<span class="a nw" style="left:397px;top:302px;line-height:10px;font-size:6.6px;color:#333;letter-spacing:-0.25px;">26.07.06</span>
<span class="a nw" style="left:447px;top:302px;line-height:10px;font-size:6.6px;color:#333;letter-spacing:-0.25px;">V70000</span>
<div class="a" style="left:706px;top:141px;width:9px;height:7px;background:#e4e6e8;"></div>
<svg class="a" style="left:706px;top:141px" width="9" height="7" fill="none" stroke="#777" stroke-width="0.9"><path d="M2 1 L7 6 M2 1 L2 4 M2 1 L5 1"/></svg>
<div class="a" style="left:452px;top:150.7px;width:374px;height:439.3px;background:#fdfdfd;border-left:1px solid #9a9ea2;border-right:1px solid #9a9ea2;border-top:1px solid #c3cf8e;box-shadow:1px 0 3px rgba(0,0,0,.3)"></div>
<div class="a" style="left:452px;top:150.7px;width:374px;height:2.1999999999999886px;background:#a8b597;"></div>
<div class="a" style="left:452px;top:152.89999999999998px;width:374px;height:24.600000000000023px;background:linear-gradient(180deg,#7b869e 0%,#7a889a 100%);"></div>
<span class="a nw" style="left:462.5px;top:162px;line-height:10px;font-size:10.4px;color:#e6ebef;">Purchase Order</span>
<svg class="a" style="left:764px;top:159.5px" width="60" height="14" fill="none" stroke="#dde3ea" stroke-width="1.2"><path d="M0 10.0 L12 10.0" stroke-width="1.6"/><rect x="20.5" y="0.5" width="10" height="10"/><path d="M41 1 L49.5 9 M49.5 1 L41 9"/></svg>
<span class="a nw" style="left:463.5px;top:181px;line-height:10px;font-size:6.5px;color:#363636;letter-spacing:-0.25px;">Vendor</span>
<span class="a nw" style="left:463.5px;top:191px;line-height:10px;font-size:6.5px;color:#363636;letter-spacing:-0.25px;">Name</span>
<span class="a nw" style="left:463.5px;top:200px;line-height:10px;font-size:6.5px;color:#363636;letter-spacing:-0.25px;">Contact Person</span>
<span class="a nw" style="left:463.5px;top:209px;line-height:10px;font-size:6.5px;color:#363636;letter-spacing:-0.25px;">Vendor Ref. No.</span>
<svg class="a" style="left:528px;top:183px" width="9" height="6" viewBox="0 0 9 6"><path d="M0.6 1.7 L4.3 1.7 L4.3 0.4 L8.2 3 L4.3 5.6 L4.3 4.3 L0.6 4.3 Z" fill="#b9c23a" stroke="#7d6a22" stroke-width="0.7" stroke-linejoin="round"/></svg>
<svg class="a" style="left:528px;top:202px" width="9" height="6" viewBox="0 0 9 6"><path d="M0.6 1.7 L4.3 1.7 L4.3 0.4 L8.2 3 L4.3 5.6 L4.3 4.3 L0.6 4.3 Z" fill="#b9c23a" stroke="#7d6a22" stroke-width="0.7" stroke-linejoin="round"/></svg>
<div class="a" style="left:537px;top:182.5px;width:91px;height:8.0px;background:#e3e5e7;border-radius:1px"></div>
<div class="a" style="left:537px;top:191.5px;width:91px;height:8.0px;background:#e3e5e7;"></div>
<div class="a" style="left:537px;top:200.8px;width:91px;height:8.0px;background:#f1f0e6;"></div>
<div class="a" style="left:537px;top:210px;width:91px;height:8px;background:#fff;border:1px solid #e2e4e6"></div>
<span class="a nw" style="left:538.5px;top:182px;line-height:10px;font-size:6.5px;color:#363636;letter-spacing:-0.25px;">V60000</span>
<span class="a nw" style="left:538.5px;top:190px;line-height:10px;font-size:6.5px;color:#363636;letter-spacing:-0.25px;">CTI Computers</span>
<span class="a nw" style="left:538.5px;top:200px;line-height:10px;font-size:6.5px;color:#363636;letter-spacing:-0.25px;">Ryan Kall</span>
<svg class="a" style="left:622.5px;top:202.5px" width="5" height="3.5"><path d="M0 0 L5 0 L2.5 3.5 Z" fill="#222"/></svg>
<svg class="a" style="left:630px;top:201px" width="8" height="8" fill="none" stroke="#b5b5b5" stroke-width="0.8"><circle cx="4" cy="4" r="3.3"/><path d="M4 2.5 L4 5.5"/></svg>
<div class="a" style="left:462.5px;top:219.5px;width:72.0px;height:8.5px;background:#fff;border:1px solid #d6d8da"></div>
<span class="a nw" style="left:464px;top:219px;line-height:10px;font-size:6.5px;color:#363636;letter-spacing:-0.25px;">Local Currency</span>
<svg class="a" style="left:530px;top:221.5px" width="5" height="3.5"><path d="M0 0 L5 0 L2.5 3.5 Z" fill="#222"/></svg>
<span class="a nw" style="left:650.6px;top:181px;line-height:10px;font-size:6.5px;color:#363636;letter-spacing:-0.25px;">No.</span>
<span class="a nw" style="left:650.6px;top:190px;line-height:10px;font-size:6.5px;color:#363636;letter-spacing:-0.25px;">Status</span>
<span class="a nw" style="left:650.6px;top:200px;line-height:10px;font-size:6.5px;color:#363636;letter-spacing:-0.25px;">Posting Date</span>
<span class="a nw" style="left:650.6px;top:209px;line-height:10px;font-size:6.5px;color:#363636;letter-spacing:-0.25px;">Delivery Date</span>
<span class="a nw" style="left:650.6px;top:219px;line-height:10px;font-size:6.5px;color:#363636;letter-spacing:-0.25px;">Document Date</span>
<div class="a" style="left:674px;top:182px;width:48px;height:8.5px;background:#dfe1e3;"></div>
<span class="a nw" style="left:675.5px;top:181px;line-height:10px;font-size:6.5px;color:#363636;letter-spacing:-0.25px;">Primary</span>
<div class="a" style="left:724px;top:182px;width:50px;height:8.5px;background:#e3e5e7;"></div>
<span class="a nw" style="left:725.5px;top:181px;line-height:10px;font-size:6.5px;color:#363636;letter-spacing:-0.25px;">4</span>
<div class="a" style="left:776px;top:182px;width:32px;height:8.5px;background:#e3e5e7;"></div>
<span class="a nw" style="left:774.5px;top:181px;line-height:10px;font-size:6.5px;color:#363636;letter-spacing:-0.25px;">- 0</span>
<div class="a" style="left:724px;top:191.5px;width:84px;height:8.0px;background:#e3e5e7;"></div>
<span class="a nw" style="left:725.5px;top:191px;line-height:10px;font-size:6.5px;color:#363636;letter-spacing:-0.25px;">Closed</span>
<div class="a" style="left:724px;top:201px;width:84px;height:8px;background:#e3e5e7;"></div>
<span class="a nw" style="left:725.5px;top:200px;line-height:10px;font-size:6.5px;color:#363636;letter-spacing:-0.25px;">15.01.06</span>
<div class="a" style="left:724px;top:210.2px;width:84px;height:8.0px;background:#e3e5e7;"></div>
<span class="a nw" style="left:725.5px;top:209px;line-height:10px;font-size:6.5px;color:#363636;letter-spacing:-0.25px;">30.01.06</span>
<div class="a" style="left:724px;top:219.5px;width:84px;height:8.300000000000011px;background:#fff;border:1px solid #e0e2e4"></div>
<span class="a nw" style="left:725.5px;top:219px;line-height:10px;font-size:6.5px;color:#363636;letter-spacing:-0.25px;">15.01.06</span>
<div class="a" style="left:462px;top:279px;width:345.5px;height:166.5px;background:#fff;border:1px solid #e2e4e6"></div>
<div class="a" style="left:468px;top:267.6px;width:59px;height:12.399999999999977px;background:#fff;border:1px solid #dcdfe2;border-bottom:none"></div>
<span class="a nw" style="left:468.0px;width:59px;text-align:center;top:269px;line-height:10px;font-size:6.3px;color:#333;letter-spacing:-0.25px;">Contents</span>
<div class="a" style="left:527px;top:267.8px;width:55px;height:11.399999999999977px;background:#e9ebed;border:1px solid #d4d7da"></div>
<span class="a nw" style="left:527.0px;width:55px;text-align:center;top:269px;line-height:10px;font-size:6.3px;color:#333;letter-spacing:-0.25px;">Logistics</span>
<div class="a" style="left:582px;top:267.8px;width:64px;height:11.399999999999977px;background:#e9ebed;border:1px solid #d4d7da"></div>
<span class="a nw" style="left:582.0px;width:64px;text-align:center;top:269px;line-height:10px;font-size:6.3px;color:#333;letter-spacing:-0.25px;">Accounting</span>
<div class="a" style="left:646px;top:267.8px;width:91.60000000000002px;height:11.399999999999977px;background:#e9ebed;border:1px solid #d4d7da"></div>
<span class="a nw" style="left:646.0px;width:91.60000000000002px;text-align:center;top:269px;line-height:10px;font-size:6.3px;color:#333;letter-spacing:-0.25px;">Electronic Documents</span>
<div class="a" style="left:737.6px;top:267.8px;width:65.39999999999998px;height:11.399999999999977px;background:#e9ebed;border:1px solid #d4d7da"></div>
<span class="a nw" style="left:737.5999999999999px;width:65.39999999999998px;text-align:center;top:269px;line-height:10px;font-size:6.3px;color:#333;letter-spacing:-0.25px;">Attachments</span>
<span class="a nw" style="left:470px;top:286px;line-height:10px;font-size:6.5px;color:#363636;letter-spacing:-0.25px;">Item/Service Type</span>
<div class="a" style="left:540px;top:286px;width:43px;height:8.5px;background:#e3e5e7;"></div>
<span class="a nw" style="left:541px;top:286px;line-height:10px;font-size:6.5px;color:#363636;letter-spacing:-0.25px;">Item</span>
<span class="a nw" style="left:689px;top:286px;line-height:10px;font-size:6.5px;color:#363636;letter-spacing:-0.25px;">Summary Type</span>
<div class="a" style="left:754px;top:286.5px;width:50.5px;height:8.5px;background:#fff;border:1px solid #eceef0"></div>
<span class="a nw" style="left:756px;top:286px;line-height:10px;font-size:6.5px;color:#363636;letter-spacing:-0.25px;">No Summary</span>
<svg class="a" style="left:798.8px;top:288.3px" width="5" height="3.5"><path d="M0 0 L5 0 L2.5 3.5 Z" fill="#222"/></svg>
<div class="a" style="left:468.5px;top:296px;width:325.5px;height:111px;background:#f4f5f6;border:1px solid #e0e2e4"></div>
<div class="a" style="left:468.5px;top:296px;width:325.5px;height:10.5px;background:#e6e8ea;"></div>
<span class="a nw" style="left:472px;top:296px;line-height:10px;font-size:6.3px;color:#333;letter-spacing:-0.25px;">#</span>
<span class="a nw" style="left:482px;top:296px;line-height:10px;font-size:6.3px;color:#333;letter-spacing:-0.25px;">Item No.</span>
<span class="a nw" style="left:538px;top:296px;line-height:10px;font-size:6.3px;color:#333;letter-spacing:-0.25px;">Item Descripti...</span>
<span class="a nw" style="left:588px;top:296px;line-height:10px;font-size:6.3px;color:#333;letter-spacing:-0.25px;">Quantity</span>
<span class="a nw" style="left:638px;top:296px;line-height:10px;font-size:6.3px;color:#333;letter-spacing:-0.25px;">Unit Price</span>
<span class="a nw" style="left:700.4px;top:296px;line-height:10px;font-size:6.3px;color:#333;letter-spacing:-0.25px;">Disc...</span>
<span class="a nw" style="left:725.6px;top:296px;line-height:10px;font-size:6.3px;color:#333;letter-spacing:-0.25px;">Tax Code</span>
<span class="a nw" style="left:756px;top:296px;line-height:10px;font-size:6.3px;color:#333;letter-spacing:-0.25px;">Total (LC)</span>
<svg class="a" style="left:796px;top:297px" width="7" height="7" fill="none" stroke="#999" stroke-width="0.8"><path d="M1 1 L6 6 M2.5 1 L6 1 L6 4.5"/></svg>
<div class="a" style="left:468.5px;top:308.5px;width:325.5px;height:9.199999999999989px;background:#e2e5e9;"></div>
<div class="a" style="left:468.5px;top:317.7px;width:325.5px;height:0.6999999999999886px;background:rgba(255,255,255,.85);"></div>
<span class="a nw" style="left:471.5px;top:308px;line-height:10px;font-size:6.5px;color:#363636;letter-spacing:-0.25px;">1</span>
<svg class="a" style="left:481px;top:310px" width="9" height="6" viewBox="0 0 9 6"><path d="M0.6 1.7 L4.3 1.7 L4.3 0.4 L8.2 3 L4.3 5.6 L4.3 4.3 L0.6 4.3 Z" fill="#b9c23a" stroke="#7d6a22" stroke-width="0.7" stroke-linejoin="round"/></svg>
<span class="a nw" style="left:491.5px;top:308px;line-height:10px;font-size:6.5px;color:#363636;letter-spacing:-0.25px;">A00003</span>
<span class="a nw" style="left:538px;top:308.2px;width:47px;overflow:hidden;line-height:10px;font-size:6.5px;color:#2b2b2b">IBM Infoprint 1222</span>
<span class="a nw" style="right:392px;top:308px;line-height:10px;font-size:6.5px;color:#363636;letter-spacing:-0.25px;">10</span>
<span class="a nw" style="right:329px;top:308px;line-height:10px;font-size:6.5px;color:#363636;letter-spacing:-0.25px;">GBP 112.50</span>
<span class="a nw" style="right:304.5px;top:308px;line-height:10px;font-size:6.5px;color:#363636;letter-spacing:-0.25px;">0.00</span>
<span class="a nw" style="left:724.5px;top:308px;line-height:10px;font-size:6.5px;color:#363636;letter-spacing:-0.25px;">X1</span>
<div class="a" style="left:468.5px;top:318.43px;width:325.5px;height:9.199999999999989px;background:#e6e8eb;"></div>
<div class="a" style="left:468.5px;top:327.63px;width:325.5px;height:0.6999999999999886px;background:rgba(255,255,255,.85);"></div>
<span class="a nw" style="left:471.5px;top:318px;line-height:10px;font-size:6.5px;color:#363636;letter-spacing:-0.25px;">2</span>
<svg class="a" style="left:481px;top:320px" width="9" height="6" viewBox="0 0 9 6"><path d="M0.6 1.7 L4.3 1.7 L4.3 0.4 L8.2 3 L4.3 5.6 L4.3 4.3 L0.6 4.3 Z" fill="#b9c23a" stroke="#7d6a22" stroke-width="0.7" stroke-linejoin="round"/></svg>
<span class="a nw" style="left:491.5px;top:318px;line-height:10px;font-size:6.5px;color:#363636;letter-spacing:-0.25px;">A00004</span>
<span class="a nw" style="left:538px;top:318.13px;width:47px;overflow:hidden;line-height:10px;font-size:6.5px;color:#2b2b2b">HP Color Laser Jet</span>
<span class="a nw" style="right:392px;top:318px;line-height:10px;font-size:6.5px;color:#363636;letter-spacing:-0.25px;">10</span>
<span class="a nw" style="right:329px;top:318px;line-height:10px;font-size:6.5px;color:#363636;letter-spacing:-0.25px;">GBP 187.50</span>
<span class="a nw" style="right:304.5px;top:318px;line-height:10px;font-size:6.5px;color:#363636;letter-spacing:-0.25px;">0.00</span>
<span class="a nw" style="left:724.5px;top:318px;line-height:10px;font-size:6.5px;color:#363636;letter-spacing:-0.25px;">X1</span>
<div class="a" style="left:468.5px;top:328.36px;width:325.5px;height:9.199999999999989px;background:#e2e5e9;"></div>
<div class="a" style="left:468.5px;top:337.56px;width:325.5px;height:0.6999999999999886px;background:rgba(255,255,255,.85);"></div>
<span class="a nw" style="left:471.5px;top:328px;line-height:10px;font-size:6.5px;color:#363636;letter-spacing:-0.25px;">3</span>
<svg class="a" style="left:481px;top:330px" width="9" height="6" viewBox="0 0 9 6"><path d="M0.6 1.7 L4.3 1.7 L4.3 0.4 L8.2 3 L4.3 5.6 L4.3 4.3 L0.6 4.3 Z" fill="#b9c23a" stroke="#7d6a22" stroke-width="0.7" stroke-linejoin="round"/></svg>
<span class="a nw" style="left:491.5px;top:328px;line-height:10px;font-size:6.5px;color:#363636;letter-spacing:-0.25px;">A00005</span>
<span class="a nw" style="left:538px;top:328.06px;width:47px;overflow:hidden;line-height:10px;font-size:6.5px;color:#2b2b2b">HP Color Laser Jet</span>
<span class="a nw" style="right:392px;top:328px;line-height:10px;font-size:6.5px;color:#363636;letter-spacing:-0.25px;">10</span>
<span class="a nw" style="right:329px;top:328px;line-height:10px;font-size:6.5px;color:#363636;letter-spacing:-0.25px;">GBP 150.00</span>
<span class="a nw" style="right:304.5px;top:328px;line-height:10px;font-size:6.5px;color:#363636;letter-spacing:-0.25px;">0.00</span>
<span class="a nw" style="left:724.5px;top:328px;line-height:10px;font-size:6.5px;color:#363636;letter-spacing:-0.25px;">X1</span>
<div class="a" style="left:468.5px;top:338.29px;width:325.5px;height:9.199999999999989px;background:#e6e8eb;"></div>
<div class="a" style="left:468.5px;top:347.49px;width:325.5px;height:0.6999999999999886px;background:rgba(255,255,255,.85);"></div>
<span class="a nw" style="left:471.5px;top:338px;line-height:10px;font-size:6.5px;color:#363636;letter-spacing:-0.25px;">4</span>
<svg class="a" style="left:481px;top:340px" width="9" height="6" viewBox="0 0 9 6"><path d="M0.6 1.7 L4.3 1.7 L4.3 0.4 L8.2 3 L4.3 5.6 L4.3 4.3 L0.6 4.3 Z" fill="#c9b430" stroke="#7d6a22" stroke-width="0.7" stroke-linejoin="round"/></svg>
<span class="a nw" style="left:491.5px;top:338px;line-height:10px;font-size:6.5px;color:#363636;letter-spacing:-0.25px;">C00001</span>
<span class="a nw" style="left:538px;top:337.99px;width:47px;overflow:hidden;line-height:10px;font-size:6.5px;color:#2b2b2b">Motherboard P4 Tur</span>
<span class="a nw" style="right:392px;top:338px;line-height:10px;font-size:6.5px;color:#363636;letter-spacing:-0.25px;">10</span>
<span class="a nw" style="right:329px;top:338px;line-height:10px;font-size:6.5px;color:#363636;letter-spacing:-0.25px;">GBP 150.00</span>
<span class="a nw" style="right:304.5px;top:338px;line-height:10px;font-size:6.5px;color:#363636;letter-spacing:-0.25px;">0.00</span>
<span class="a nw" style="left:724.5px;top:338px;line-height:10px;font-size:6.5px;color:#363636;letter-spacing:-0.25px;">X1</span>
<div class="a" style="left:468.5px;top:348.21999999999997px;width:325.5px;height:9.199999999999989px;background:#e2e5e9;"></div>
<div class="a" style="left:468.5px;top:357.41999999999996px;width:325.5px;height:0.6999999999999886px;background:rgba(255,255,255,.85);"></div>
<span class="a nw" style="left:471.5px;top:348px;line-height:10px;font-size:6.5px;color:#363636;letter-spacing:-0.25px;">5</span>
<svg class="a" style="left:481px;top:350px" width="9" height="6" viewBox="0 0 9 6"><path d="M0.6 1.7 L4.3 1.7 L4.3 0.4 L8.2 3 L4.3 5.6 L4.3 4.3 L0.6 4.3 Z" fill="#c9b430" stroke="#7d6a22" stroke-width="0.7" stroke-linejoin="round"/></svg>
<span class="a nw" style="left:491.5px;top:348px;line-height:10px;font-size:6.5px;color:#363636;letter-spacing:-0.25px;">C00002</span>
<span class="a nw" style="left:538px;top:347.91999999999996px;width:47px;overflow:hidden;line-height:10px;font-size:6.5px;color:#2b2b2b">Motherboard P4 Tur</span>
<span class="a nw" style="right:392px;top:348px;line-height:10px;font-size:6.5px;color:#363636;letter-spacing:-0.25px;">10</span>
<span class="a nw" style="right:329px;top:348px;line-height:10px;font-size:6.5px;color:#363636;letter-spacing:-0.25px;">GBP 112.50</span>
<span class="a nw" style="right:304.5px;top:348px;line-height:10px;font-size:6.5px;color:#363636;letter-spacing:-0.25px;">0.00</span>
<span class="a nw" style="left:724.5px;top:348px;line-height:10px;font-size:6.5px;color:#363636;letter-spacing:-0.25px;">X1</span>
<div class="a" style="left:468.5px;top:358.15px;width:325.5px;height:9.199999999999989px;background:#e6e8eb;"></div>
<div class="a" style="left:468.5px;top:367.34999999999997px;width:325.5px;height:0.6999999999999886px;background:rgba(255,255,255,.85);"></div>
<span class="a nw" style="left:471.5px;top:358px;line-height:10px;font-size:6.5px;color:#363636;letter-spacing:-0.25px;">6</span>
<svg class="a" style="left:481px;top:360px" width="9" height="6" viewBox="0 0 9 6"><path d="M0.6 1.7 L4.3 1.7 L4.3 0.4 L8.2 3 L4.3 5.6 L4.3 4.3 L0.6 4.3 Z" fill="#c9b430" stroke="#7d6a22" stroke-width="0.7" stroke-linejoin="round"/></svg>
<span class="a nw" style="left:491.5px;top:358px;line-height:10px;font-size:6.5px;color:#363636;letter-spacing:-0.25px;">C00003</span>
<span class="a nw" style="left:538px;top:357.84999999999997px;width:47px;overflow:hidden;line-height:10px;font-size:6.5px;color:#2b2b2b">Intel P4 2.4 GhZ</span>
<span class="a nw" style="right:392px;top:358px;line-height:10px;font-size:6.5px;color:#363636;letter-spacing:-0.25px;">10</span>
<span class="a nw" style="right:329px;top:358px;line-height:10px;font-size:6.5px;color:#363636;letter-spacing:-0.25px;">GBP 46.75</span>
<span class="a nw" style="right:304.5px;top:358px;line-height:10px;font-size:6.5px;color:#363636;letter-spacing:-0.25px;">0.00</span>
<span class="a nw" style="left:724.5px;top:358px;line-height:10px;font-size:6.5px;color:#363636;letter-spacing:-0.25px;">X1</span>
<div class="a" style="left:468.5px;top:368.08px;width:325.5px;height:9.199999999999989px;background:#e2e5e9;"></div>
<div class="a" style="left:468.5px;top:377.28px;width:325.5px;height:0.6999999999999886px;background:rgba(255,255,255,.85);"></div>
<span class="a nw" style="left:471.5px;top:368px;line-height:10px;font-size:6.5px;color:#363636;letter-spacing:-0.25px;">7</span>
<svg class="a" style="left:481px;top:370px" width="9" height="6" viewBox="0 0 9 6"><path d="M0.6 1.7 L4.3 1.7 L4.3 0.4 L8.2 3 L4.3 5.6 L4.3 4.3 L0.6 4.3 Z" fill="#c9b430" stroke="#7d6a22" stroke-width="0.7" stroke-linejoin="round"/></svg>
<span class="a nw" style="left:491.5px;top:368px;line-height:10px;font-size:6.5px;color:#363636;letter-spacing:-0.25px;">C00004</span>
<span class="a nw" style="left:538px;top:367.78px;width:47px;overflow:hidden;line-height:10px;font-size:6.5px;color:#2b2b2b">Tower Case with P</span>
<span class="a nw" style="right:392px;top:368px;line-height:10px;font-size:6.5px;color:#363636;letter-spacing:-0.25px;">10</span>
<span class="a nw" style="right:329px;top:368px;line-height:10px;font-size:6.5px;color:#363636;letter-spacing:-0.25px;">GBP 13.13</span>
<span class="a nw" style="right:304.5px;top:368px;line-height:10px;font-size:6.5px;color:#363636;letter-spacing:-0.25px;">0.00</span>
<span class="a nw" style="left:724.5px;top:368px;line-height:10px;font-size:6.5px;color:#363636;letter-spacing:-0.25px;">X1</span>
<div class="a" style="left:468.5px;top:377.5px;width:11.5px;height:29.5px;background:#e3e5e7;"></div>
<div class="a" style="left:480px;top:377.5px;width:314px;height:28.5px;background:#fafbfb;"></div>
<div class="a" style="left:480px;top:386.5px;width:314px;height:0.6999999999999886px;background:#e6e8ea;"></div>
<div class="a" style="left:480px;top:396.5px;width:314px;height:0.6999999999999886px;background:#e6e8ea;"></div>
<div class="a" style="left:536px;top:296px;width:0.7000000000000455px;height:111px;background:rgba(255,255,255,.9);"></div>
<div class="a" style="left:586px;top:296px;width:0.7000000000000455px;height:111px;background:rgba(255,255,255,.9);"></div>
<div class="a" style="left:635.6px;top:296px;width:0.7000000000000455px;height:111px;background:rgba(255,255,255,.9);"></div>
<div class="a" style="left:698px;top:296px;width:0.7000000000000455px;height:111px;background:rgba(255,255,255,.9);"></div>
<div class="a" style="left:722px;top:296px;width:0.7000000000000455px;height:111px;background:rgba(255,255,255,.9);"></div>
<div class="a" style="left:753.5px;top:296px;width:0.7000000000000455px;height:111px;background:rgba(255,255,255,.9);"></div>
<div class="a" style="left:536px;top:377.5px;width:0.7000000000000455px;height:28.5px;background:#e8eaec;"></div>
<div class="a" style="left:586px;top:377.5px;width:0.7000000000000455px;height:28.5px;background:#e8eaec;"></div>
<div class="a" style="left:635.6px;top:377.5px;width:0.7000000000000455px;height:28.5px;background:#e8eaec;"></div>
<div class="a" style="left:698px;top:377.5px;width:0.7000000000000455px;height:28.5px;background:#e8eaec;"></div>
<div class="a" style="left:722px;top:377.5px;width:0.7000000000000455px;height:28.5px;background:#e8eaec;"></div>
<div class="a" style="left:753.5px;top:377.5px;width:0.7000000000000455px;height:28.5px;background:#e8eaec;"></div>
<div class="a" style="left:490px;top:411px;width:150px;height:3px;background:#d5d7d9;border-radius:2px"></div>
<span class="a nw" style="left:463px;top:446px;line-height:10px;font-size:6.5px;color:#363636;letter-spacing:-0.25px;">Buyer</span>
<div class="a" style="left:538px;top:448px;width:90px;height:8.5px;background:#fff;border:1px solid #e0e2e4"></div>
<span class="a nw" style="left:539.5px;top:447px;line-height:10px;font-size:6.5px;color:#363636;letter-spacing:-0.25px;">James Chan (Buyer)</span>
<svg class="a" style="left:622px;top:449.8px" width="5" height="3.5"><path d="M0 0 L5 0 L2.5 3.5 Z" fill="#222"/></svg>
<span class="a nw" style="left:463px;top:457px;line-height:10px;font-size:6.5px;color:#363636;letter-spacing:-0.25px;">Owner</span>
<div class="a" style="left:538px;top:457.5px;width:90px;height:8.5px;background:#fff;border:1px solid #e0e2e4"></div>
<span class="a nw" style="left:463px;top:504px;line-height:10px;font-size:6.5px;color:#363636;letter-spacing:-0.25px;">Remarks</span>
<div class="a" style="left:538px;top:505px;width:90px;height:35px;background:#fff;border:1px solid #d8dadc"></div>
<div class="a" style="left:461.5px;top:555px;width:52.5px;height:12px;background:#2b4a66;border-left:3px solid #e7a733"></div>
<span class="a nw" style="left:467.5px;width:40px;text-align:center;top:556px;line-height:10px;font-size:6.5px;color:#fff;letter-spacing:-0.25px;">OK</span>
<div class="a" style="left:517.5px;top:555px;width:39.5px;height:12px;background:#2b4a66;"></div>
<span class="a nw" style="left:517.2px;width:40px;text-align:center;top:556px;line-height:10px;font-size:6.5px;color:#fff;letter-spacing:-0.25px;">Cancel</span>
<span class="a nw" style="left:649.7px;top:450px;line-height:10px;font-size:6.5px;color:#2b2b2b;letter-spacing:-0.25px;">Total Before Discount</span>
<span class="a nw" style="left:649.7px;top:459px;line-height:10px;font-size:6.5px;color:#2b2b2b;letter-spacing:-0.25px;">Discount</span>
<span class="a nw" style="left:649.7px;top:469px;line-height:10px;font-size:6.5px;color:#2b2b2b;letter-spacing:-0.25px;">Freight</span>
<span class="a nw" style="left:661px;top:478px;line-height:10px;font-size:6.5px;color:#aaa;letter-spacing:-0.25px;">Rounding</span>
<span class="a nw" style="left:649.7px;top:487px;line-height:10px;font-size:6.5px;color:#2b2b2b;letter-spacing:-0.25px;">Tax</span>
<span class="a nw" style="left:649.7px;top:496px;line-height:10px;font-size:6.5px;color:#2b2b2b;letter-spacing:-0.25px;">Total Payment Due</span>
<div class="a" style="left:650px;top:478.5px;width:7.5px;height:8.0px;background:#fff;border:1px solid #c8c8c8"></div>
<div class="a" style="left:723.5px;top:451px;width:84.5px;height:8.5px;background:#e4e6e8;"></div>
<div class="a" style="left:723.5px;top:460px;width:84.5px;height:8.5px;background:#e4e6e8;"></div>
<div class="a" style="left:723.5px;top:469.2px;width:84.5px;height:8.5px;background:#e4e6e8;"></div>
<div class="a" style="left:723.5px;top:478.5px;width:84.5px;height:8.5px;background:#e4e6e8;"></div>
<div class="a" style="left:723.5px;top:487.8px;width:84.5px;height:8.5px;background:#e4e6e8;"></div>
<div class="a" style="left:723.5px;top:497.2px;width:84.5px;height:8.5px;background:#e4e6e8;"></div>
<span class="a nw" style="right:217px;top:450px;line-height:10px;font-size:6.5px;color:#363636;letter-spacing:-0.25px;">GBP 7,743.80</span>
<span class="a nw" style="right:217px;top:497px;line-height:10px;font-size:6.5px;color:#363636;letter-spacing:-0.25px;">GBP 7,743.80</span>
<div class="a" style="left:691px;top:460px;width:21px;height:8.5px;background:#e4e6e8;"></div>
<span class="a nw" style="left:714.5px;top:459px;line-height:10px;font-size:6.5px;color:#363636;letter-spacing:-0.25px;">%</span>
<svg class="a" style="left:715px;top:471px" width="9" height="6" viewBox="0 0 9 6"><path d="M0.6 1.7 L4.3 1.7 L4.3 0.4 L8.2 3 L4.3 5.6 L4.3 4.3 L0.6 4.3 Z" fill="#b9c23a" stroke="#7d6a22" stroke-width="0.7" stroke-linejoin="round"/></svg>
<div class="a" style="left:746px;top:555px;width:61.5px;height:11px;background:#e9eaeb;border-radius:1px"></div>
<span class="a nw" style="left:746.7px;width:60px;text-align:center;top:556px;line-height:10px;font-size:6.3px;color:#aaa;letter-spacing:-0.25px;">Copy To</span>
</body></html>
